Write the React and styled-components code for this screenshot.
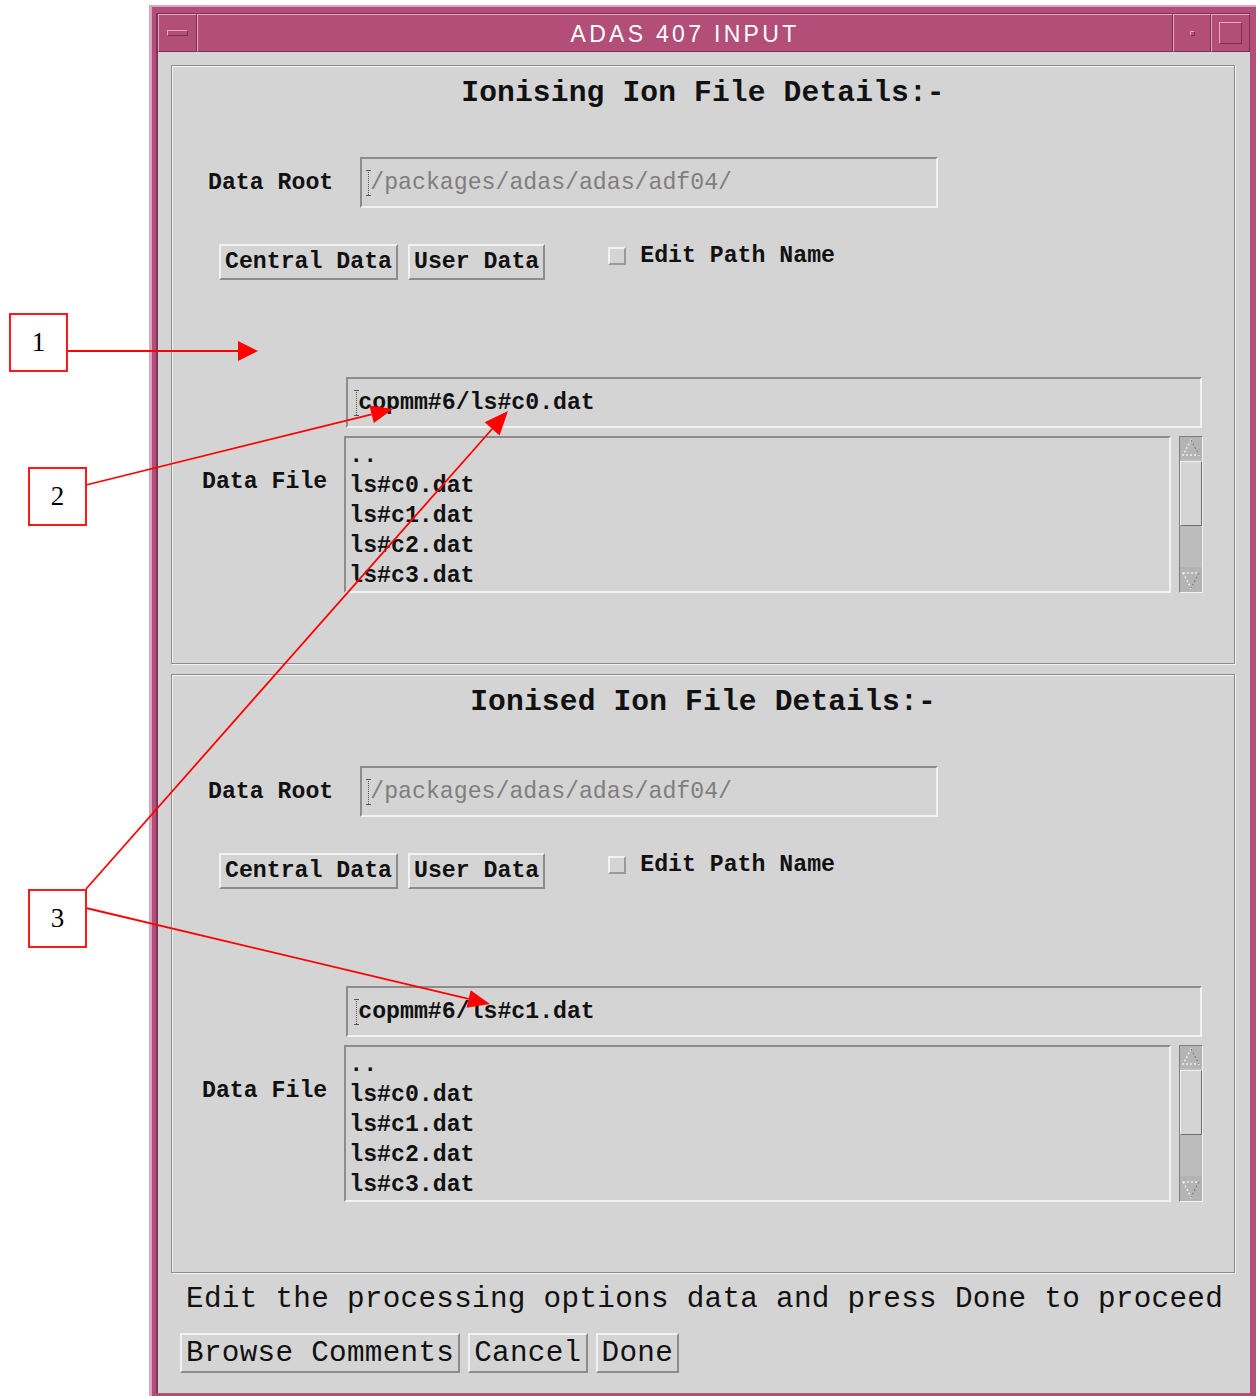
import React from 'react';
import styled, { createGlobalStyle } from 'styled-components';

const GlobalStyle = createGlobalStyle`
  html, body {
    margin: 0;
    padding: 0;
    background: #ffffff;
  }
  body {
    font-family: "Liberation Mono", "DejaVu Sans Mono", monospace;
  }
`;

const GREY = '#d4d4d4';
const DARK = '#8c8c8c';
const LIGHT = '#f2f2f2';
const PINK = '#b24e78';

const Stage = styled.div`
  position: relative;
  width: 1256px;
  height: 1396px;
  overflow: hidden;
  background: #ffffff;
`;

// window manager frame
const Window = styled.div`
  box-sizing: border-box;
  width: 1107px;
  height: 1391px;
  margin: 5px 0 0 149px;
  background: ${PINK};
  border-left: 3px solid #dca4be;
  border-top: 2px solid #dca4be;
  padding: 6px 6px 3px 4px;
  display: flex;
`;

const Inner = styled.div`
  flex: 1;
  display: flex;
  flex-direction: column;
  border-left: 2px solid #7d3356;
  border-top: 1px solid #7d3356;
`;

const TitleBar = styled.div`
  height: 38px;
  display: flex;
`;

const FrameButton = styled.div`
  box-sizing: border-box;
  width: ${p => p.$w}px;
  height: 38px;
  background: ${PINK};
  border: 1px solid;
  border-color: #e3a9c3 #7a2f50 #7a2f50 #e3a9c3;
  display: flex;
  align-items: center;
  justify-content: center;
`;

const TitleArea = styled(FrameButton)`
  flex: 1;
  color: #ffffff;
  font-family: "Liberation Sans", Arial, sans-serif;
  font-size: 23px;
  letter-spacing: 3.3px;
  padding-top: 2px;
`;

const MenuBar = styled.span`
  width: 21px;
  height: 6px;
  box-sizing: border-box;
  border: 1px solid;
  border-color: #e3a9c3 #7a2f50 #7a2f50 #e3a9c3;
`;

const Dot = styled.span`
  width: 5px;
  height: 5px;
  box-sizing: border-box;
  border: 1px solid;
  border-color: #e3a9c3 #7a2f50 #7a2f50 #e3a9c3;
`;

const MaxBox = styled.span`
  width: 23px;
  height: 22px;
  box-sizing: border-box;
  border: 1px solid;
  border-color: #e3a9c3 #7a2f50 #7a2f50 #e3a9c3;
`;

const Body = styled.div`
  flex: 1;
  background: ${GREY};
  padding: 13px 15px 0 13px;
  display: flex;
  flex-direction: column;
`;

const Panel = styled.section`
  box-sizing: border-box;
  height: 599px;
  border: 1px solid ${DARK};
  box-shadow: inset 1px 1px 0 ${LIGHT}, 1px 1px 0 ${LIGHT};
  padding-top: 10px;
  display: flex;
  flex-direction: column;

  & + & {
    margin-top: 10px;
  }
`;

const Heading = styled.div`
  text-align: center;
  font-size: 29.6px;
  font-weight: bold;
  line-height: 34px;
  letter-spacing: 0.15px;
  color: #111;
`;

const Row = styled.div`
  display: flex;
  align-items: ${p => p.$align || 'center'};
  margin-top: ${p => p.$top}px;
  padding-left: ${p => p.$left}px;
`;

const Label = styled.span`
  font-size: 23.2px;
  font-weight: bold;
  color: #111;
  margin-right: ${p => p.$gap}px;
  margin-bottom: ${p => p.$lift || 0}px;
`;

const Sunken = styled.div`
  box-sizing: border-box;
  border: 2px solid;
  border-color: ${DARK} ${LIGHT} ${LIGHT} ${DARK};
  background: ${GREY};
`;

const Field = styled(Sunken)`
  height: 51px;
  width: ${p => (p.$w ? `${p.$w}px` : 'auto')};
  margin: ${p => p.$margin || 0};
  display: flex;
  align-items: center;
  padding-left: ${p => p.$pad}px;
  font-size: 23.2px;
  font-weight: ${p => (p.$disabled ? 'normal' : 'bold')};
  color: ${p => (p.$disabled ? '#7e7e7e' : '#111')};
  white-space: pre;
`;

const Caret = styled.span`
  display: inline-block;
  width: 5px;
  height: 26px;
  margin-right: -1px;
  background:
    linear-gradient(#555, #555) top center / 5px 1px no-repeat,
    linear-gradient(#555, #555) bottom center / 5px 1px no-repeat,
    repeating-linear-gradient(to bottom, #555 0 1px, transparent 1px 2px) center / 1px 100% no-repeat;
`;

const Button = styled.button`
  box-sizing: border-box;
  height: ${p => p.$h}px;
  padding: 0 ${p => p.$pad}px;
  margin: 0;
  background: ${GREY};
  border: 2px solid;
  border-color: ${LIGHT} ${DARK} ${DARK} ${LIGHT};
  font-family: "Liberation Mono", "DejaVu Sans Mono", monospace;
  font-size: ${p => p.$size}px;
  font-weight: ${p => (p.$bold ? 'bold' : 'normal')};
  letter-spacing: ${p => p.$spacing || 0}px;
  color: #111;
  white-space: pre;
  cursor: pointer;
`;

const ButtonGroup = styled.div`
  display: flex;
  gap: ${p => p.$gap}px;
`;

const CheckOption = styled.label`
  display: flex;
  align-items: center;
  gap: 14px;
  margin-left: 63px;
  align-self: flex-start;
  font-size: 23.2px;
  font-weight: bold;
  color: #111;
  line-height: 24px;
`;

const CheckBox = styled.span`
  box-sizing: border-box;
  width: 18px;
  height: 18px;
  border: 2px solid;
  border-color: ${LIGHT} #9a9a9a #9a9a9a ${LIGHT};
`;

const FileColumn = styled.div`
  width: 859px;
  display: flex;
  flex-direction: column;
`;

const ListRow = styled.div`
  display: flex;
  gap: 8px;
  margin-top: 8px;
  height: 157px;
`;

const ListBox = styled(Sunken)`
  flex: 1;
  padding: 3px 0 0 3px;
  overflow: hidden;
`;

const ListItem = styled.div`
  font-size: 23.2px;
  font-weight: bold;
  line-height: 30px;
  color: #111;
`;

const Scrollbar = styled.div`
  box-sizing: border-box;
  width: 24px;
  background: #bcbcbc;
  border: 1px solid;
  border-color: #7e7e7e ${LIGHT} ${LIGHT} #7e7e7e;
  display: flex;
  flex-direction: column;
`;

const ArrowCap = styled.div`
  height: ${p => p.$h}px;
  display: flex;
  align-items: center;
  justify-content: center;
  background: #b4b4b4;
`;

const Thumb = styled.div`
  box-sizing: border-box;
  height: 65px;
  margin: 2px 0 0;
  background: ${GREY};
  border: 1px solid;
  border-color: ${LIGHT} #6e6e6e #6e6e6e ${LIGHT};
`;

const Trough = styled.div`
  flex: 1;
`;

const Message = styled.div`
  margin-top: 10px;
  padding-left: 15px;
  font-size: 29.3px;
  line-height: 34px;
  letter-spacing: 0.3px;
  color: #111;
  white-space: pre;
`;

const Actions = styled(ButtonGroup)`
  margin-top: 16px;
  padding-left: 9px;
`;

// callout overlay
const Callout = styled.div`
  position: absolute;
  left: ${p => p.$x}px;
  top: ${p => p.$y}px;
  box-sizing: border-box;
  width: 59px;
  height: 59px;
  border: 2px solid #ff1a1a;
  background: #ffffff;
  display: flex;
  align-items: center;
  justify-content: center;
  font-family: "Liberation Serif", "Times New Roman", serif;
  font-size: 27px;
  color: #000;
`;

const Overlay = styled.svg`
  position: absolute;
  left: 0;
  top: 0;
  pointer-events: none;
`;

const files = ['..', 'ls#c0.dat', 'ls#c1.dat', 'ls#c2.dat', 'ls#c3.dat'];

const sections = [
  { title: 'Ionising Ion File Details:-', file: 'copmm#6/ls#c0.dat' },
  { title: 'Ionised Ion File Details:-', file: 'copmm#6/ls#c1.dat' },
];

const arrows = [
  { from: [67, 351], to: [258, 351], len: 20, half: 10 },
  { from: [86, 485], to: [393, 409], len: 22, half: 9 },
  { from: [86, 889], to: [508, 411], len: 24, half: 10 },
  { from: [86, 908], to: [490, 1004], len: 22, half: 9 },
];

const callouts = [
  { n: 1, x: 9, y: 313 },
  { n: 2, x: 28, y: 467 },
  { n: 3, x: 28, y: 889 },
];

function Arrow({ from, to, len, half }) {
  const [x1, y1] = from;
  const [x2, y2] = to;
  const d = Math.hypot(x2 - x1, y2 - y1);
  const ux = (x2 - x1) / d;
  const uy = (y2 - y1) / d;
  const bx = x2 - ux * len;
  const by = y2 - uy * len;
  const pts = [
    [x2, y2],
    [bx - uy * half, by + ux * half],
    [bx + uy * half, by - ux * half],
  ].map(p => p.join(',')).join(' ');
  return (
    <g>
      <line x1={x1} y1={y1} x2={bx} y2={by} stroke="#ff0000" strokeWidth="1.8" />
      <polygon points={pts} fill="#ff0000" />
    </g>
  );
}

function ScrollArrow({ down }) {
  return (
    <svg width="20" height="20" viewBox="0 0 20 20">
      <polygon
        points={down ? '2,3 18,3 10,18' : '10,2 2,17 18,17'}
        fill="none"
        stroke="#eeeeee"
        strokeWidth="1.4"
        strokeDasharray="2 2"
      />
      <line
        x1={down ? 18 : 10}
        y1={down ? 3 : 2}
        x2={down ? 10 : 18}
        y2={down ? 18 : 17}
        stroke="#777"
        strokeWidth="1.4"
        strokeDasharray="2 2"
      />
    </svg>
  );
}

function FileSection({ title, file }) {
  return (
    <Panel>
      <Heading>{title}</Heading>

      <Row $top={47} $left={36}>
        <Label $gap={27}>Data Root</Label>
        <Field $w={578} $pad={4} $disabled>
          <Caret />/packages/adas/adas/adf04/
        </Field>
      </Row>

      <Row $top={36} $left={47}>
        <ButtonGroup $gap={10}>
          <Button $h={36} $pad={4} $size={23.2} $bold>Central Data</Button>
          <Button $h={36} $pad={4} $size={23.2} $bold>User Data</Button>
        </ButtonGroup>
        <CheckOption>
          <CheckBox />
          Edit Path Name
        </CheckOption>
      </Row>

      <Row $top={97} $left={30}>
        <Label $gap={17} $lift={6}>Data File</Label>
        <FileColumn>
          <Field $pad={6} $margin="0 1px 0 2px">
            <Caret />{file}
          </Field>
          <ListRow>
            <ListBox>
              {files.map(f => (
                <ListItem key={f}>{f}</ListItem>
              ))}
            </ListBox>
            <Scrollbar>
              <ArrowCap $h={22}><ScrollArrow /></ArrowCap>
              <Thumb />
              <Trough />
              <ArrowCap $h={25}><ScrollArrow down /></ArrowCap>
            </Scrollbar>
          </ListRow>
        </FileColumn>
      </Row>
    </Panel>
  );
}

export default function App() {
  return (
    <Stage>
      <GlobalStyle />
      <Window>
        <Inner>
          <TitleBar>
            <FrameButton $w={39}><MenuBar /></FrameButton>
            <TitleArea>ADAS 407 INPUT</TitleArea>
            <FrameButton $w={38}><Dot /></FrameButton>
            <FrameButton $w={39}><MaxBox /></FrameButton>
          </TitleBar>
          <Body>
            {sections.map(s => (
              <FileSection key={s.title} title={s.title} file={s.file} />
            ))}
            <Message>Edit the processing options data and press Done to proceed</Message>
            <Actions $gap={8}>
              <Button $h={40} $pad={4} $size={29.3} $spacing={0.3}>Browse Comments</Button>
              <Button $h={40} $pad={4} $size={29.3} $spacing={0.3}>Cancel</Button>
              <Button $h={40} $pad={4} $size={29.3} $spacing={0.3}>Done</Button>
            </Actions>
          </Body>
        </Inner>
      </Window>

      <Overlay width="1256" height="1396" viewBox="0 0 1256 1396">
        {arrows.map((a, i) => (
          <Arrow key={i} {...a} />
        ))}
      </Overlay>
      {callouts.map(c => (
        <Callout key={c.n} $x={c.x} $y={c.y}>{c.n}</Callout>
      ))}
    </Stage>
  );
}
